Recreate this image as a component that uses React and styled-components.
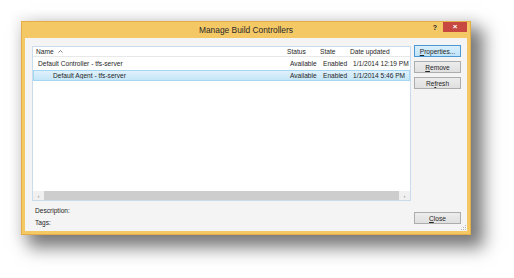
import React from "react";
import styled, { createGlobalStyle } from "styled-components";

const Global = createGlobalStyle`
  html, body { margin: 0; padding: 0; background: #ffffff; }
  body { font-family: "Liberation Sans", Arial, sans-serif; }
`;

const Page = styled.div`
  width: 514px;
  height: 278px;
  padding: 21px 0 0 21px;
  box-sizing: border-box;
  background: #ffffff;
`;

const Dialog = styled.div`
  width: 450px;
  height: 214px;
  box-sizing: border-box;
  background: #f4c865;
  outline: 1px solid #e4ad45;
  outline-offset: -1px;
  padding: 0 4px 4px 4px;
  display: flex;
  flex-direction: column;
  box-shadow: 10px 10px 16px 3px rgba(0, 0, 0, 0.5), 0 0 10px 5px rgba(0, 0, 0, 0.05);
`;

const TitleBar = styled.div`
  height: 17px;
  position: relative;
  display: flex;
  align-items: center;
  justify-content: center;
  font-size: 8.4px;
  color: #2b2b2b;
`;

const TitleButtons = styled.div`
  position: absolute;
  right: 0;
  top: 1px;
  display: flex;
  align-items: flex-start;
`;

const HelpButton = styled.div`
  width: 14px;
  height: 10px;
  font-size: 7px;
  font-weight: bold;
  color: #222;
  display: flex;
  align-items: center;
  justify-content: center;
  margin-right: 1px;
`;

const CloseX = styled.div`
  width: 24px;
  height: 10px;
  background: #c74741;
  color: #ffffff;
  font-size: 8px;
  font-weight: bold;
  display: flex;
  align-items: center;
  justify-content: center;
  line-height: 1;
`;

const Body = styled.div`
  flex: 1;
  background: #f4f4f4;
  display: flex;
  flex-direction: column;
  padding: 8px 6px 0 7px;
  font-size: 6.6px;
  color: #262626;
`;

const MainRow = styled.div`
  display: flex;
  gap: 3px;
`;

const List = styled.div`
  width: 379px;
  height: 155px;
  box-sizing: border-box;
  border: 1px solid #c8dcee;
  background: #ffffff;
  display: flex;
  flex-direction: column;
`;

const Grid = styled.div`
  display: grid;
  grid-template-columns: 251px 33px 30px 1fr;
  align-items: center;
`;

const HeaderRow = styled(Grid)`
  height: 9px;
  border-bottom: 1px solid #e8e8e8;
`;

const HeaderCell = styled.div`
  padding-left: 3px;
  white-space: nowrap;
  display: flex;
  align-items: center;
  gap: 4px;
`;

const DataRow = styled(Grid)`
  height: 11px;
  margin-top: 1px;
  box-sizing: border-box;
  border: 1px solid ${(p) => (p.$selected ? "#a5d7f3" : "transparent")};
  background: ${(p) =>
    p.$selected ? "linear-gradient(#dff1fc, #c4e6f8)" : "transparent"};
`;

const Cell = styled.div`
  padding-left: ${(p) => p.$indent || 4}px;
  white-space: nowrap;
  overflow: hidden;
`;

const Spacer = styled.div`
  flex: 1;
`;

const HScroll = styled.div`
  height: 9px;
  display: flex;
  background: #f0f0f0;
`;

const ScrollArrow = styled.div`
  width: 11px;
  display: flex;
  align-items: center;
  justify-content: center;
  color: #8a8a8a;
  font-size: 6px;
  background: #f0f0f0;
`;

const ScrollThumb = styled.div`
  flex: 1;
  background: #cdcdcd;
`;

const ButtonCol = styled.div`
  display: flex;
  flex-direction: column;
  gap: 4px;
  margin-top: -1px;
`;

const Button = styled.div`
  width: 47px;
  height: 12px;
  box-sizing: border-box;
  border: 1px solid ${(p) => (p.$default ? "#4b98d4" : "#adadad")};
  background: ${(p) =>
    p.$default ? "linear-gradient(#d9effc, #bfe3f9)" : "linear-gradient(#ececec, #e0e0e0)"};
  display: flex;
  align-items: center;
  justify-content: center;
  font-size: 6.6px;
  color: #262626;

  u { text-decoration: underline; text-underline-offset: 1px; }
`;

const Footer = styled.div`
  flex: 1;
  display: flex;
  justify-content: space-between;
  padding: 6px 0 0 3px;
  position: relative;
`;

const Labels = styled.div`
  display: flex;
  flex-direction: column;
  gap: 5px;
`;

const CloseWrap = styled.div`
  padding-top: 5px;
`;

const Grip = styled.svg`
  position: absolute;
  right: -5px;
  bottom: 1px;
`;

function SortCaret() {
  return (
    <svg width="5" height="3" viewBox="0 0 5 3">
      <path d="M0.5 2.5 L2.5 0.5 L4.5 2.5" fill="none" stroke="#707070" strokeWidth="0.9" />
    </svg>
  );
}

const rows = [
  { name: "Default Controller - tfs-server", indent: 4, status: "Available", state: "Enabled", date: "1/1/2014 12:19 PM" },
  { name: "Default Agent - tfs-server", indent: 19, status: "Available", state: "Enabled", date: "1/1/2014 5:46 PM", selected: true },
];

export default function App() {
  return (
    <>
      <Global />
      <Page>
        <Dialog>
          <TitleBar>
            Manage Build Controllers
            <TitleButtons>
              <HelpButton>?</HelpButton>
              <CloseX>×</CloseX>
            </TitleButtons>
          </TitleBar>
          <Body>
            <MainRow>
              <List>
                <HeaderRow>
                  <HeaderCell>
                    Name <SortCaret />
                  </HeaderCell>
                  <HeaderCell>Status</HeaderCell>
                  <HeaderCell>State</HeaderCell>
                  <HeaderCell>Date updated</HeaderCell>
                </HeaderRow>
                {rows.map((r) => (
                  <DataRow key={r.name} $selected={r.selected}>
                    <Cell $indent={r.indent}>{r.name}</Cell>
                    <Cell $indent={5}>{r.status}</Cell>
                    <Cell $indent={5}>{r.state}</Cell>
                    <Cell $indent={5}>{r.date}</Cell>
                  </DataRow>
                ))}
                <Spacer />
                <HScroll>
                  <ScrollArrow>‹</ScrollArrow>
                  <ScrollThumb />
                  <ScrollArrow>›</ScrollArrow>
                </HScroll>
              </List>
              <ButtonCol>
                <Button $default>
                  <span><u>P</u>roperties...</span>
                </Button>
                <Button>
                  <span><u>R</u>emove</span>
                </Button>
                <Button>
                  <span>Re<u>f</u>resh</span>
                </Button>
              </ButtonCol>
            </MainRow>
            <Footer>
              <Labels>
                <span>Description:</span>
                <span>Tags:</span>
              </Labels>
              <CloseWrap>
                <Button>
                  <span><u>C</u>lose</span>
                </Button>
              </CloseWrap>
              <Grip width="5" height="5" viewBox="0 0 5 5">
                <rect x="4" y="0" width="1" height="1" fill="#b8b8b8" />
                <rect x="2" y="2" width="1" height="1" fill="#b8b8b8" />
                <rect x="4" y="2" width="1" height="1" fill="#b8b8b8" />
                <rect x="0" y="4" width="1" height="1" fill="#b8b8b8" />
                <rect x="2" y="4" width="1" height="1" fill="#b8b8b8" />
                <rect x="4" y="4" width="1" height="1" fill="#b8b8b8" />
              </Grip>
            </Footer>
          </Body>
        </Dialog>
      </Page>
    </>
  );
}
